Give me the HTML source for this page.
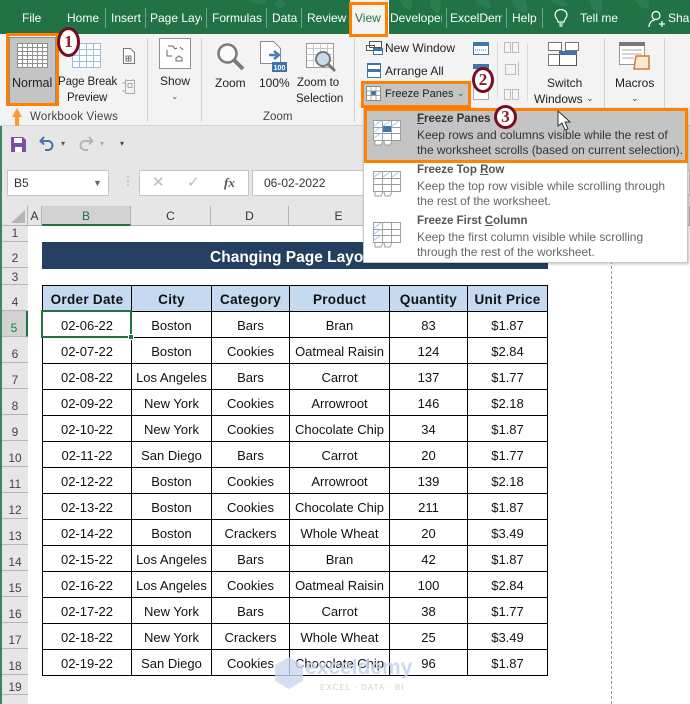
<!DOCTYPE html>
<html><head><meta charset="utf-8">
<style>
html,body{margin:0;padding:0;background:#fff}
#p{position:relative;width:690px;height:704px;overflow:hidden;font-family:"Liberation Sans",sans-serif;font-size:12px;color:#222;background:#fff}
.a{position:absolute}
.t{position:absolute;white-space:nowrap;line-height:15px}
.r{font-size:11.5px}
.tab{position:absolute;top:11px;color:#fff;font-size:12px;line-height:15px;white-space:nowrap}
.sep{position:absolute;top:8px;width:1px;height:20px;background:#6fa588}
.o{position:absolute;border:3px solid #ff8000;box-sizing:border-box}
.n{position:absolute;border:3px solid #7a0c22;border-radius:50%;background:#fff;box-sizing:border-box;color:#8b1a2b;font:bold 17px/20px "Liberation Serif",serif;text-align:center}
table{position:absolute;left:42px;top:285px;width:505px;border-collapse:collapse;table-layout:fixed;font-size:13px;color:#111}
td{border:1px solid #000;height:24px;padding:1px 0 0;text-align:center;white-space:nowrap;overflow:visible}
tr.h td{background:#c5d9f1;font-weight:bold;font-size:13.5px;letter-spacing:.3px}
.rh{position:absolute;left:2px;width:26px;height:26px;line-height:34px;text-align:center;background:#e6e6e6;border-bottom:1px solid #b5b5b5;box-sizing:border-box;color:#444;font-size:12px;overflow:hidden}
.ch{position:absolute;top:206px;height:20px;line-height:20px;text-align:center;background:#e6e6e6;border-right:1px solid #b5b5b5;border-bottom:1px solid #b5b5b5;box-sizing:border-box;color:#333;font-size:12px}
.mt{position:absolute;left:417px;font-weight:bold;font-size:11.5px;color:#555;line-height:14px;white-space:nowrap}
.md{position:absolute;left:417px;font-size:12px;color:#666;line-height:15px;white-space:nowrap;letter-spacing:-.03px}
</style></head><body><div id="p">

<!-- Title bar -->
<div class="a" style="left:0;top:0;width:690px;height:34px;background:#217346"></div>
<svg class="a" style="left:250px;top:0" width="440" height="34" viewBox="0 0 440 34" fill="#2a7d50"><ellipse cx="8" cy="1" rx="8" ry="3"/><ellipse cx="30" cy="4" rx="5" ry="4"/><path d="M115 0c3 8 10 12 18 12-1-6-5-10-8-12zM150 0c2 6 6 9 10 10 3-3 3-7 2-10zM180 0c-1 6 3 12 8 14 3-4 4-10 2-14zM225 0c4 5 9 8 16 8 0-3-1-6-3-8zM262 0c2 7 7 12 14 13 2-4 1-9-1-13zM300 0c5 5 11 7 18 6-1-2-2-4-4-6zM340 0c0 7 4 12 10 14 3-5 3-10 1-14zM385 0c3 6 8 9 14 9 1-3 0-6-1-9z"/></svg>
<div class="tab" style="left:22px">File</div>
<div class="tab" style="left:67px">Home</div><div class="sep" style="left:105px"></div>
<div class="tab" style="left:111px">Insert</div><div class="sep" style="left:145px"></div>
<div class="tab" style="left:150px;width:52px;overflow:hidden">Page Layc</div><div class="sep" style="left:206px"></div>
<div class="tab" style="left:212px">Formulas</div><div class="sep" style="left:266px"></div>
<div class="tab" style="left:272px">Data</div><div class="sep" style="left:301px"></div>
<div class="tab" style="left:307px">Review</div>
<div class="tab" style="left:390px;width:52px;overflow:hidden">Developer</div><div class="sep" style="left:446px"></div>
<div class="tab" style="left:450px;width:52px;overflow:hidden">ExcelDemy</div><div class="sep" style="left:506px"></div>
<div class="tab" style="left:512px">Help</div><div class="sep" style="left:542px"></div>
<svg class="a" style="left:553px;top:9px" width="16" height="19" viewBox="0 0 16 19" fill="none" stroke="#fff" stroke-width="1.2"><path d="M5 13c0-3-3-4-3-7a6 5.500 0 0 1 12 0c0 3-3 4-3 7zM6 15h4M6.500 17h3"/></svg>
<div class="tab" style="left:580px">Tell me</div>
<svg class="a" style="left:648px;top:10px" width="17" height="18" viewBox="0 0 17 18" fill="none" stroke="#fff" stroke-width="1.2"><circle cx="8" cy="5.500" r="4"/><path d="M1 17c0-4 3-7 6-7M11 14h6M14 11v6"/></svg>
<div class="tab" style="left:668px">Share</div>

<!-- Ribbon -->
<div class="a" style="left:0;top:34px;width:690px;height:92px;background:#f3f3f3;border-bottom:1px solid #d6d6d6;box-sizing:border-box"></div>
<div class="a" style="left:350px;top:0;width:39px;height:37px;background:#f3f3f3"></div>
<div class="t" style="left:355px;top:11px;color:#217346">View</div>
<div class="o" style="left:349px;top:2px;width:39px;height:35px"></div>

<!-- Normal -->
<div class="a" style="left:9px;top:37px;width:47px;height:68px;background:#c4c4c4;border:1px solid #8d8d8d;box-sizing:border-box"></div>
<svg class="a" style="left:17px;top:43px" width="31" height="25" viewBox="0 0 31 25" fill="#fff" stroke="#8f8f8f" stroke-width="1"><path d="M.5.500h30v24H.5zM.5 4.500h30M.5 8.500h30M.5 12.500h30M.5 16.500h30M.5 20.500h30M5.500.500v24M10.500.500v24M15.500.500v24M20.500.500v24M25.500.500v24"/></svg>
<div class="t" style="left:12px;top:76px;font-size:12.500px;color:#222">Normal</div>
<div class="o" style="left:6px;top:33px;width:53px;height:73px"></div>
<svg class="a" style="left:11px;top:107px" width="12" height="19" viewBox="0 0 12 19"><path d="M6 1l5 9H8v9H4v-9H1z" fill="#ff9a2e"/></svg>

<!-- Page break -->
<svg class="a" style="left:72px;top:43px" width="29" height="25" viewBox="0 0 29 25" fill="#fff" stroke="#9fbcdc" stroke-width="1"><path d="M.5.500h28v24H.5zM.5 6.500h28M.5 12.500h28M.5 18.500h28M7.500.500v24M14.500.500v24M21.500.500v24"/></svg>
<div class="t r" style="left:58px;top:75px;letter-spacing:-.1px">Page Break</div>
<div class="t r" style="left:67px;top:91px;letter-spacing:-.1px">Preview</div>
<svg class="a" style="left:122px;top:48px" width="13" height="16" viewBox="0 0 13 16" fill="#fff" stroke="#777"><path d="M1.500.500h7l4 4v11h-11zM4 8h5v5H4zM6.500 8v5M4 10.500h5"/></svg>
<svg class="a" style="left:121px;top:78px" width="17" height="17" viewBox="0 0 17 17" fill="none" stroke="#aaa"><path d="M4.500 2.500h9v13h-9zM1 5h3M1 13h3M7 5.500h4v4H7zM5 1v2M12 1v2"/></svg>
<div class="t r" style="left:30px;top:110px;color:#444;letter-spacing:.2px">Workbook Views</div>
<div class="a" style="left:147px;top:38px;width:1px;height:84px;background:#d0d0d0"></div>

<!-- Show -->
<div class="a" style="left:159px;top:38px;width:32px;height:31px;background:#fff;border:1px solid #8f8f8f;box-sizing:border-box"></div>
<svg class="a" style="left:166px;top:45px" width="19" height="18" viewBox="0 0 19 18" fill="none" stroke="#666"><path d="M2 1h5l2 3 2-1M1 5v6h5M14 2l3 3M10 16v-3l3-2 3 2v3z"/></svg>
<div class="t" style="left:160px;top:74px">Show</div>
<div class="t" style="left:171px;top:89px;font-size:9px;color:#555">&#8964;</div>
<div class="a" style="left:201px;top:38px;width:1px;height:84px;background:#d0d0d0"></div>

<!-- Zoom group -->
<svg class="a" style="left:216px;top:42px" width="30" height="30" viewBox="0 0 30 30" fill="none"><circle cx="11.500" cy="11.500" r="9" stroke="#7b7b7b" stroke-width="2.500" fill="#fafafa"/><path d="M18 18l9 9" stroke="#7a7a7a" stroke-width="4"/></svg>
<div class="t" style="left:215px;top:76px">Zoom</div>
<svg class="a" style="left:260px;top:41px" width="27" height="31" viewBox="0 0 27 31"><path d="M.5.500h13l7 7v15H.5z" fill="#fff" stroke="#8a8a8a"/><path d="M9 14h8M14 10l5 4-5 4" fill="none" stroke="#4a7fb5" stroke-width="2.500"/><rect x="12" y="21" width="15" height="10" fill="#3f74ac"/><text x="19.500" y="29" font-size="7" font-weight="bold" fill="#fff" text-anchor="middle" font-family="Liberation Sans">100</text></svg>
<div class="t" style="left:259px;top:76px">100%</div>
<svg class="a" style="left:306px;top:43px" width="31" height="30" viewBox="0 0 31 30"><path d="M.5.500h27v24H.5z" fill="#fff" stroke="#999"/><path d="M.5 5.500h27M.5 11.500h27M.5 17.500h27M7.500.500v24M14.500.500v24M21.500.500v24" stroke="#c8c8c8"/><circle cx="17" cy="16" r="7" fill="#c7dcf0" stroke="#777" stroke-width="2"/><path d="M22 21l7 7" stroke="#777" stroke-width="3"/></svg>
<div class="t r" style="left:297px;top:76px">Zoom to</div>
<div class="t r" style="left:296px;top:92px">Selection</div>
<div class="t r" style="left:263px;top:110px;color:#444">Zoom</div>
<div class="a" style="left:354px;top:38px;width:1px;height:84px;background:#d0d0d0"></div>

<!-- Window -->
<svg class="a" style="left:366px;top:41px" width="17" height="14" viewBox="0 0 17 14" fill="#fff" stroke="#555"><path d="M3.500.500h12v6h-12zM.500 4.500h8v5h-8z"/><rect x="7" y="7" width="10" height="7" fill="#3f74ac" stroke="none"/><rect x="8" y="10" width="8" height="3" fill="#fff" stroke="none"/></svg>
<div class="t" style="left:385px;top:41px">New Window</div>
<svg class="a" style="left:367px;top:63px" width="14" height="15" viewBox="0 0 14 15" fill="#fff"><rect width="14" height="15" fill="#3f74ac"/><rect x="1" y="2" width="12" height="4" fill="#fff"/><rect x="1" y="9" width="12" height="5" fill="#fff"/></svg>
<div class="t" style="left:385px;top:64px">Arrange All</div>
<div class="a" style="left:363px;top:83px;width:106px;height:24px;background:#c4c4c4"></div>
<svg class="a" style="left:366px;top:86px" width="15" height="16" viewBox="0 0 15 16"><path d="M.5.500h14v14H.5z" fill="#fff" stroke="#8a8a8a"/><rect x="5" y="5" width="5" height="4" fill="#3f74ac"/><path d="M.5 5h14M.5 9.500h14M5 .500v14M10 .500v14" stroke="#8a8a8a" stroke-width=".7"/></svg>
<div class="t" style="left:385px;top:87px;font-size:11px;color:#222">Freeze Panes</div>
<div class="t" style="left:457px;top:86px;font-size:9px;color:#444">&#8964;</div>
<div class="o" style="left:361px;top:81px;width:110px;height:27px"></div>
<svg class="a" style="left:473px;top:42px" width="16" height="58" viewBox="0 0 16 58"><rect x=".5" y=".500" width="15" height="12" fill="#fff" stroke="#3f74ac"/><rect x="0" y="0" width="16" height="4" fill="#3f74ac"/><path d="M2 8h12" stroke="#3f74ac" stroke-dasharray="1 1"/><rect x="0" y="22" width="16" height="5" fill="#3f74ac"/><rect x=".5" y="45.500" width="15" height="12" fill="#fff" stroke="#aaa"/></svg>
<svg class="a" style="left:503px;top:42px" width="18" height="58" viewBox="0 0 18 58" fill="none" stroke="#bdbdbd"><path d="M1.500.500h6v10h-6zM9.500.500h6v10h-6zM2.500 22.500h10v10h-10zM15.500 20v14M1.500 47.500h6v10h-6zM9.500 47.500h6v10h-6z"/></svg>
<div class="a" style="left:497px;top:42px;width:1px;height:57px;background:#d8d8d8"></div>
<div class="a" style="left:527px;top:44px;width:1px;height:57px;background:#d8d8d8"></div>
<svg class="a" style="left:548px;top:42px" width="32" height="25" viewBox="0 0 32 25" fill="#fff" stroke="#777"><path d="M.5.500h13v8H.5zM17.500.500h13v8h-13zM.5 12.500h13v11H.5z"/><rect x="11.500" y="9.500" width="17" height="14" stroke="#555"/><rect x="11" y="9" width="18" height="4" fill="#3f74ac" stroke="none"/></svg>
<div class="t" style="left:547px;top:76px">Switch</div>
<div class="t" style="left:534px;top:92px">Windows</div>
<div class="t" style="left:586px;top:91px;font-size:9px;color:#444">&#8964;</div>
<div class="a" style="left:604px;top:38px;width:1px;height:84px;background:#d0d0d0"></div>
<svg class="a" style="left:619px;top:42px" width="32" height="29" viewBox="0 0 32 29"><path d="M.5.500h25v22H.5z" fill="#fff" stroke="#999"/><rect width="26" height="4" fill="#7a7a7a"/><path d="M3 8h20M3 12h20M3 16h12" stroke="#aaa"/><path d="M17 14h13v13H15z" fill="#fbe9d4" stroke="#d9772a" stroke-width="1.500"/></svg>
<div class="t" style="left:615px;top:76px">Macros</div>
<div class="t" style="left:631px;top:91px;font-size:9px;color:#444">&#8964;</div>
<div class="a" style="left:664px;top:38px;width:1px;height:84px;background:#d0d0d0"></div>

<!-- QAT + formula -->
<div class="a" style="left:0;top:126px;width:690px;height:80px;background:#e6e6e6"></div>
<svg class="a" style="left:11px;top:137px" width="15" height="15" viewBox="0 0 15 15"><path d="M0 0h12l3 3v12H0z" fill="#7a4fa8"/><rect x="3" y="1" width="8" height="5" fill="#fff"/><rect x="4" y="10" width="7" height="5" fill="#fff"/></svg>
<svg class="a" style="left:39px;top:136px" width="16" height="15" viewBox="0 0 16 15" fill="none" stroke="#3f74ac" stroke-width="2"><path d="M5 1L1.500 5 5 8.500M2 5h7a4.500 4.500 0 0 1 0 9H6"/></svg>
<svg class="a" style="left:78px;top:136px" width="16" height="15" viewBox="0 0 16 15" fill="none" stroke="#b5b5b5" stroke-width="2"><path d="M11 1l3.500 4L11 8.500M14 5H7a4.500 4.500 0 0 0 0 9h3"/></svg>
<div class="t" style="left:61px;top:136px;font-size:8px;color:#555">&#9662;</div>
<div class="t" style="left:100px;top:136px;font-size:8px;color:#aaa">&#9662;</div>
<div class="t" style="left:120px;top:136px;font-size:8px;color:#444">&#9662;</div>

<div class="a" style="left:7px;top:170px;width:102px;height:26px;background:#fff;border:1px solid #c6c6c6;box-sizing:border-box"></div>
<div class="t" style="left:14px;top:176px;color:#333">B5</div>
<div class="t" style="left:93px;top:176px;font-size:9px;color:#666">&#9660;</div>
<div class="t" style="left:122px;top:174px;color:#aaa">&#8942;</div>
<div class="a" style="left:139px;top:170px;width:110px;height:26px;background:#fff;border:1px solid #c6c6c6;box-sizing:border-box"></div>
<div class="t" style="left:152px;top:175px;color:#bbb;font-size:15px">&#10005;</div>
<div class="t" style="left:187px;top:175px;color:#bbb;font-size:15px">&#10003;</div>
<div class="t" style="left:224px;top:175px;color:#555;font:italic bold 13px/15px 'Liberation Serif',serif">fx</div>
<div class="a" style="left:252px;top:170px;width:438px;height:26px;background:#fff;border:1px solid #c6c6c6;box-sizing:border-box"></div>
<div class="t" style="left:264px;top:176px;color:#333">06-02-2022</div>

<!-- Column headers -->
<div class="a" style="left:2px;top:206px;width:26px;height:20px;background:#e6e6e6;border-right:1px solid #b5b5b5;border-bottom:1px solid #b5b5b5;box-sizing:border-box"></div>
<svg class="a" style="left:10px;top:210px" width="15" height="14"><path d="M15 0v13H1z" fill="#b5b5b5"/></svg>
<div class="ch" style="left:28px;width:14px">A</div>
<div class="ch" style="left:42px;width:89px;background:#d2d2d2;border-bottom:2px solid #217346;color:#217346">B</div>
<div class="ch" style="left:131px;width:80px">C</div>
<div class="ch" style="left:211px;width:78px">D</div>
<div class="ch" style="left:289px;width:100px">E</div>
<div class="ch" style="left:389px;width:78px">F</div>
<div class="ch" style="left:467px;width:81px">G</div>
<div class="ch" style="left:548px;width:142px">H</div>

<!-- Row headers -->
<div class="rh" style="top:226px;height:16px;line-height:15px">1</div>
<div class="rh" style="top:242px;line-height:32px">2</div>
<div class="rh" style="top:268px;height:17px;line-height:18px">3</div>
<div class="rh" style="top:285px">4</div>
<div class="rh" style="top:311px;background:#d2d2d2;color:#217346;border-right:2px solid #217346">5</div>
<div class="rh" style="top:337px">6</div>
<div class="rh" style="top:363px">7</div>
<div class="rh" style="top:389px">8</div>
<div class="rh" style="top:415px">9</div>
<div class="rh" style="top:441px">10</div>
<div class="rh" style="top:467px">11</div>
<div class="rh" style="top:493px">12</div>
<div class="rh" style="top:519px">13</div>
<div class="rh" style="top:545px">14</div>
<div class="rh" style="top:571px">15</div>
<div class="rh" style="top:597px">16</div>
<div class="rh" style="top:623px">17</div>
<div class="rh" style="top:649px">18</div>
<div class="rh" style="top:675px;height:20px;line-height:24px">19</div>
<div class="rh" style="top:695px;height:9px;border-bottom:0"></div>
<div class="a" style="left:0;top:126px;width:2px;height:578px;background:#3c8560"></div>

<!-- Sheet -->
<div class="a" style="left:42px;top:242px;width:506px;height:27px;background:#243f60"></div>
<div class="t" style="left:41px;top:250px;width:506px;text-align:center;color:#fff;font-weight:bold;font-size:15.500px">Changing Page Layout</div>
<div class="a" style="left:611px;top:226px;width:0;height:478px;border-left:1px dashed #999"></div>

<table>
<colgroup><col style="width:89px"><col style="width:80px"><col style="width:78px"><col style="width:100px"><col style="width:78px"><col style="width:80px"></colgroup>
<tr class="h"><td>Order Date</td><td>City</td><td>Category</td><td>Product</td><td>Quantity</td><td>Unit Price</td></tr>
<tr><td>02-06-22</td><td>Boston</td><td>Bars</td><td>Bran</td><td>83</td><td>$1.87</td></tr>
<tr><td>02-07-22</td><td>Boston</td><td>Cookies</td><td>Oatmeal Raisin</td><td>124</td><td>$2.84</td></tr>
<tr><td>02-08-22</td><td>Los Angeles</td><td>Bars</td><td>Carrot</td><td>137</td><td>$1.77</td></tr>
<tr><td>02-09-22</td><td>New York</td><td>Cookies</td><td>Arrowroot</td><td>146</td><td>$2.18</td></tr>
<tr><td>02-10-22</td><td>New York</td><td>Cookies</td><td>Chocolate Chip</td><td>34</td><td>$1.87</td></tr>
<tr><td>02-11-22</td><td>San Diego</td><td>Bars</td><td>Carrot</td><td>20</td><td>$1.77</td></tr>
<tr><td>02-12-22</td><td>Boston</td><td>Cookies</td><td>Arrowroot</td><td>139</td><td>$2.18</td></tr>
<tr><td>02-13-22</td><td>Boston</td><td>Cookies</td><td>Chocolate Chip</td><td>211</td><td>$1.87</td></tr>
<tr><td>02-14-22</td><td>Boston</td><td>Crackers</td><td>Whole Wheat</td><td>20</td><td>$3.49</td></tr>
<tr><td>02-15-22</td><td>Los Angeles</td><td>Bars</td><td>Bran</td><td>42</td><td>$1.87</td></tr>
<tr><td>02-16-22</td><td>Los Angeles</td><td>Cookies</td><td>Oatmeal Raisin</td><td>100</td><td>$2.84</td></tr>
<tr><td>02-17-22</td><td>New York</td><td>Bars</td><td>Carrot</td><td>38</td><td>$1.77</td></tr>
<tr><td>02-18-22</td><td>New York</td><td>Crackers</td><td>Whole Wheat</td><td>25</td><td>$3.49</td></tr>
<tr><td>02-19-22</td><td>San Diego</td><td>Cookies</td><td>Chocolate Chip</td><td>96</td><td>$1.87</td></tr>
</table>
<div class="a" style="left:41px;top:310px;width:91px;height:28px;border:2px solid #217346;box-sizing:border-box"></div>
<div class="a" style="left:128px;top:334px;width:6px;height:6px;background:#217346;border:1px solid #fff;box-sizing:border-box"></div>

<!-- Watermark -->
<svg class="a" style="left:274px;top:656px" width="30" height="34" viewBox="0 0 30 34"><path d="M15 1l14 8v16l-14 8-14-8V9z" fill="#c9d8ee" opacity=".8"/></svg>
<div class="t" style="left:305px;top:660px;font-size:21px;font-weight:bold;color:#c3d2ea;opacity:.85">exceldemy</div>
<div class="t" style="left:320px;top:680px;font-size:8px;color:#d0d0d0;letter-spacing:1px">EXCEL · DATA · BI</div>

<!-- Dropdown -->
<div class="a" style="left:363px;top:108px;width:325px;height:155px;background:#fff;border:1px solid #c6c6c6;box-shadow:1px 1px 3px rgba(0,0,0,.25);box-sizing:border-box"></div>
<div class="a" style="left:366px;top:109px;width:321px;height:52px;background:#c4c4c4"></div>
<svg class="a" style="left:373px;top:120px" width="29" height="26" viewBox="0 0 29 26" fill="#fff" stroke="#9a9a9a"><path d="M.5.500h27v20H.5zM.5 7.500h27M.5 13.500h27M9.500.500v20M18.500.500v20M2 21v4h6l2-4M11 21l1 4h5l2-4" stroke-width=".9"/><rect x="10" y="6" width="8" height="6" fill="#3f74ac" stroke="none"/><path d="M1 6l7-5M10 6l7-5M19 6l7-5M1 12l7-5M1 18l7-5" stroke="#a9c6e5"/></svg>
<svg class="a" style="left:373px;top:171px" width="29" height="26" viewBox="0 0 29 26" fill="#fff" stroke="#9a9a9a"><path d="M.5.500h27v20H.5zM.5 7.500h27M.5 13.500h27M9.500.500v20M18.500.500v20M2 21v4h6l2-4M11 21l1 4h5l2-4" stroke-width=".9"/><path d="M1 6l7-5M10 6l7-5M19 6l7-5" stroke="#a9c6e5"/></svg>
<svg class="a" style="left:373px;top:222px" width="29" height="26" viewBox="0 0 29 26" fill="#fff" stroke="#9a9a9a"><path d="M.5.500h27v20H.5zM.5 7.500h27M.5 13.500h27M9.500.500v20M18.500.500v20M2 21v4h6l2-4M11 21l1 4h5l2-4" stroke-width=".9"/><path d="M1 6l7-5M1 12l7-5M1 18l7-5" stroke="#a9c6e5"/></svg>

<div class="mt" style="top:112px;color:#333"><u>F</u>reeze Panes</div>
<div class="md" style="top:128px;color:#333">Keep rows and columns visible while the rest of</div>
<div class="md" style="top:143px;color:#333">the worksheet scrolls (based on current selection).</div>
<div class="mt" style="top:163px">Freeze Top <u>R</u>ow</div>
<div class="md" style="top:179px">Keep the top row visible while scrolling through</div>
<div class="md" style="top:194px">the rest of the worksheet.</div>
<div class="mt" style="top:214px">Freeze First <u>C</u>olumn</div>
<div class="md" style="top:230px">Keep the first column visible while scrolling</div>
<div class="md" style="top:245px">through the rest of the worksheet.</div>
<div class="o" style="left:364px;top:108px;width:324px;height:55px"></div>
<svg class="a" style="left:557px;top:110px" width="14" height="21" viewBox="0 0 14 21"><path d="M1 1v15l4-3 3 7 3-1-3-7h5z" fill="#fff" stroke="#333"/></svg>

<!-- Numbers -->
<div class="n" style="left:57px;top:27px;width:23px;height:30px;line-height:24px">1</div>
<div class="n" style="left:472px;top:67px;width:22px;height:26px">2</div>
<div class="n" style="left:494px;top:105px;width:23px;height:24px;line-height:18px">3</div>

</div></body></html>
